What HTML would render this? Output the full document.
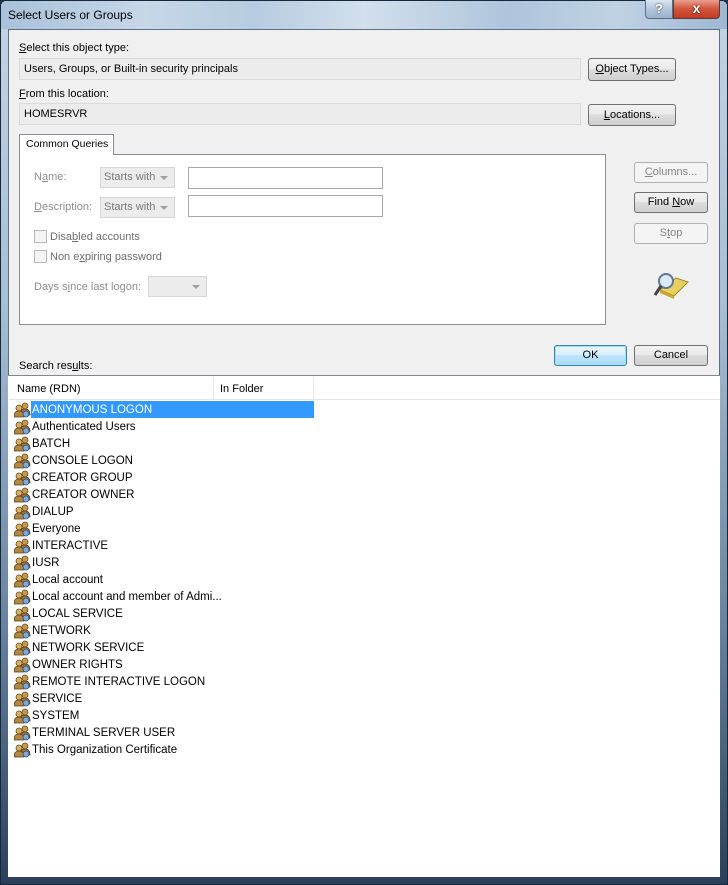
<!DOCTYPE html>
<html><head><meta charset="utf-8"><style>
*{margin:0;padding:0;box-sizing:border-box}
body{width:728px;height:885px;overflow:hidden;font-family:"Liberation Sans",sans-serif;font-size:11px;color:#000;background:#1d3550;position:relative}
.a{position:absolute;white-space:nowrap}
#frame{left:0;top:0;width:728px;height:885px;border:1px solid #15283c;border-radius:6px 6px 0 0;background:linear-gradient(180deg,#c4d4e4 0%,#a7bdd2 35%,#6a849f 70%,#2a405a 100%)}
#title{left:1px;top:1px;width:726px;height:28px;border-radius:5px 5px 0 0;background:linear-gradient(90deg,#a9c1d9 0%,#c6d7e8 20%,#b6cce0 35%,#d2dfec 50%,#aec5dc 70%,#bfd2e4 85%,#9db8d2 100%)}
#client{left:8px;top:29px;width:712px;height:848px;background:#f0f0f0;border:1px solid #5a6e84}
.tb{background:#ececec;border:1px solid #dadada;height:22px;padding:4px 4px}
.btn{border:1px solid #707070;border-radius:3px;background:linear-gradient(#f2f2f2,#ebebeb 45%,#dddddd 50%,#cfcfcf);text-align:center;line-height:19px;height:21px}
.btn.dis{border-color:#adb2b5;background:#f4f4f4;color:#838383}
.g{color:#8d8d8d}
.combo{border:1px solid #d5d5d5;background:#ececec;color:#7a7a7a;height:21px;line-height:19px;padding-left:3px}
.combo:after{content:"";position:absolute;right:6px;top:8px;border:4px solid transparent;border-top:4px solid #a0a0a0}
.inp{border:1px solid #a8a8a8;background:#fff;height:22px}
.cb{width:13px;height:13px;border:1px solid #b8b8b8;background:#f4f4f4}
.row{position:absolute;left:14px;height:17px;line-height:17px;white-space:nowrap;font-size:11.5px}
.row span{position:absolute;left:17px;top:0;padding:0 1px}
u{text-decoration:underline}
</style></head><body>
<div id="frame" class="a"></div>
<div id="title" class="a"></div>
<div class="a" style="left:8px;top:8px;font-size:12px;color:#000">Select Users or Groups</div>
<div class="a" style="left:645px;top:0;width:28px;height:19px;border:1px solid #5a6e84;border-top:none;border-radius:0 0 0 4px;background:linear-gradient(#dbe6f1,#b3c7dc 50%,#98b2cd);color:#fff;text-align:center;font-weight:bold;font-size:13px;line-height:17px;text-shadow:0 0 2px #233">?</div>
<div class="a" style="left:673px;top:0;width:47px;height:19px;border:1px solid #5a3a34;border-top:none;border-radius:0 0 4px 0;background:linear-gradient(#e8a090,#d0543a 50%,#c23c22);color:#fff;text-align:center;font-weight:bold;font-size:14px;line-height:17px;text-shadow:0 0 2px #400">x</div>
<div id="client" class="a"></div>

<div class="a" style="left:19px;top:42px"><u>S</u>elect this object type:</div>
<div class="a tb" style="left:19px;top:58px;width:562px">Users, Groups, or Built-in security principals</div>
<div class="a btn" style="left:588px;top:58px;width:88px;height:23px;line-height:21px"><u>O</u>bject Types...</div>
<div class="a" style="left:19px;top:88px"><u>F</u>rom this location:</div>
<div class="a tb" style="left:19px;top:103px;width:562px">HOMESRVR</div>
<div class="a btn" style="left:588px;top:104px;width:88px;height:22px;line-height:20px"><u>L</u>ocations...</div>

<div class="a" style="left:19px;top:154px;width:587px;height:171px;border:1px solid #898c95;background:#fff"></div>
<div class="a" style="left:19px;top:134px;width:95px;height:21px;border:1px solid #898c95;border-bottom:none;background:#fff;padding:3px 0 0 6px;font-size:10.5px">Common Queries</div>

<div class="a g" style="left:34px;top:171px">N<u>a</u>me:</div>
<div class="a combo" style="left:100px;top:167px;width:75px">Starts with</div>
<div class="a inp" style="left:188px;top:167px;width:195px"></div>
<div class="a g" style="left:34px;top:201px"><u>D</u>escription:</div>
<div class="a combo" style="left:100px;top:197px;width:75px">Starts with</div>
<div class="a inp" style="left:188px;top:195px;width:195px"></div>
<div class="a cb" style="left:34px;top:230px"></div>
<div class="a g" style="left:50px;top:231px;color:#6d6d6d">Disa<u>b</u>led accounts</div>
<div class="a cb" style="left:34px;top:250px"></div>
<div class="a g" style="left:50px;top:251px;color:#6d6d6d">Non e<u>x</u>piring password</div>
<div class="a g" style="left:34px;top:281px">Days s<u>i</u>nce last logon:</div>
<div class="a combo" style="left:148px;top:276px;width:59px"></div>

<div class="a btn dis" style="left:634px;top:162px;width:74px"><u>C</u>olumns...</div>
<div class="a btn" style="left:634px;top:192px;width:74px">Find <u>N</u>ow</div>
<div class="a btn dis" style="left:634px;top:223px;width:74px">S<u>t</u>op</div>
<svg class="a" style="left:652px;top:270px" width="38" height="30" viewBox="0 0 38 30">
<path d="M8 20 L24 8 L36 12 L22 26 Z" fill="#e8d060" stroke="#a08820"/>
<path d="M8 20 L22 26 L22 29 L8 23 Z" fill="#c8a830"/>
<circle cx="14" cy="11" r="7" fill="#dbe9f5" stroke="#5f7890" stroke-width="2"/>
<line x1="9" y1="16" x2="3" y2="25" stroke="#444" stroke-width="3"/>
</svg>

<div class="a btn" style="left:554px;top:345px;width:73px;height:21px;border-color:#3c7fb1;background:linear-gradient(#eaf6fd,#d9f0fc 45%,#bee6fd 50%,#a7d9f5);box-shadow:inset 0 0 0 1px #9ce3f7">OK</div>
<div class="a btn" style="left:634px;top:345px;width:74px;height:21px">Cancel</div>
<div class="a" style="left:19px;top:360px">Search res<u>u</u>lts:</div>

<div class="a" style="left:8px;top:375px;width:712px;height:502px;background:#fff;border-top:1px solid #828790"></div>
<div class="a" style="left:9px;top:376px;width:711px;height:24px;background:#fff;border-bottom:1px solid #e5e5e5"></div>
<div class="a" style="left:17px;top:383px">Name (RDN)</div>
<div class="a" style="left:213px;top:377px;width:1px;height:22px;background:#e5e5e5"></div>
<div class="a" style="left:220px;top:383px">In Folder</div>
<div class="a" style="left:313px;top:377px;width:1px;height:22px;background:#e5e5e5"></div>
<div class="a" style="left:31px;top:401px;width:283px;height:17px;background:#3399ff"></div>

<svg width="0" height="0" style="position:absolute"><defs><g id="ic">
<circle cx="11" cy="4" r="3" fill="#c49a50" stroke="#6a4a20" stroke-width=".8"/>
<path d="M6 13 Q6 7 11 7 Q16 7 16 13 Z" fill="#a07838" stroke="#5a3a18" stroke-width=".8"/>
<circle cx="5" cy="6" r="3" fill="#d8b060" stroke="#6a4a20" stroke-width=".8"/>
<path d="M0 15 Q0 9 5 9 Q10 9 10 15 Z" fill="#b08840" stroke="#5a3a18" stroke-width=".8"/>
<circle cx="12" cy="12" r="3" fill="#7fa8d8" stroke="#2a5080" stroke-width=".8"/>
</g></defs></svg>

<div id="rows"></div>
<script>
var n=["ANONYMOUS LOGON","Authenticated Users","BATCH","CONSOLE LOGON","CREATOR GROUP","CREATOR OWNER","DIALUP","Everyone","INTERACTIVE","IUSR","Local account","Local account and member of Admi...","LOCAL SERVICE","NETWORK","NETWORK SERVICE","OWNER RIGHTS","REMOTE INTERACTIVE LOGON","SERVICE","SYSTEM","TERMINAL SERVER USER","This Organization Certificate"];
var h="";for(var i=0;i<n.length;i++){h+='<div class="row" style="top:'+(401+17*i)+'px"><svg style="position:absolute;left:0;top:1px" width="17" height="16"><use href="#ic"/></svg><span style="top:1px'+(i==0?';color:#fff':'')+'">'+n[i]+'</span></div>';}
document.getElementById("rows").innerHTML=h;
</script>
</body></html>
